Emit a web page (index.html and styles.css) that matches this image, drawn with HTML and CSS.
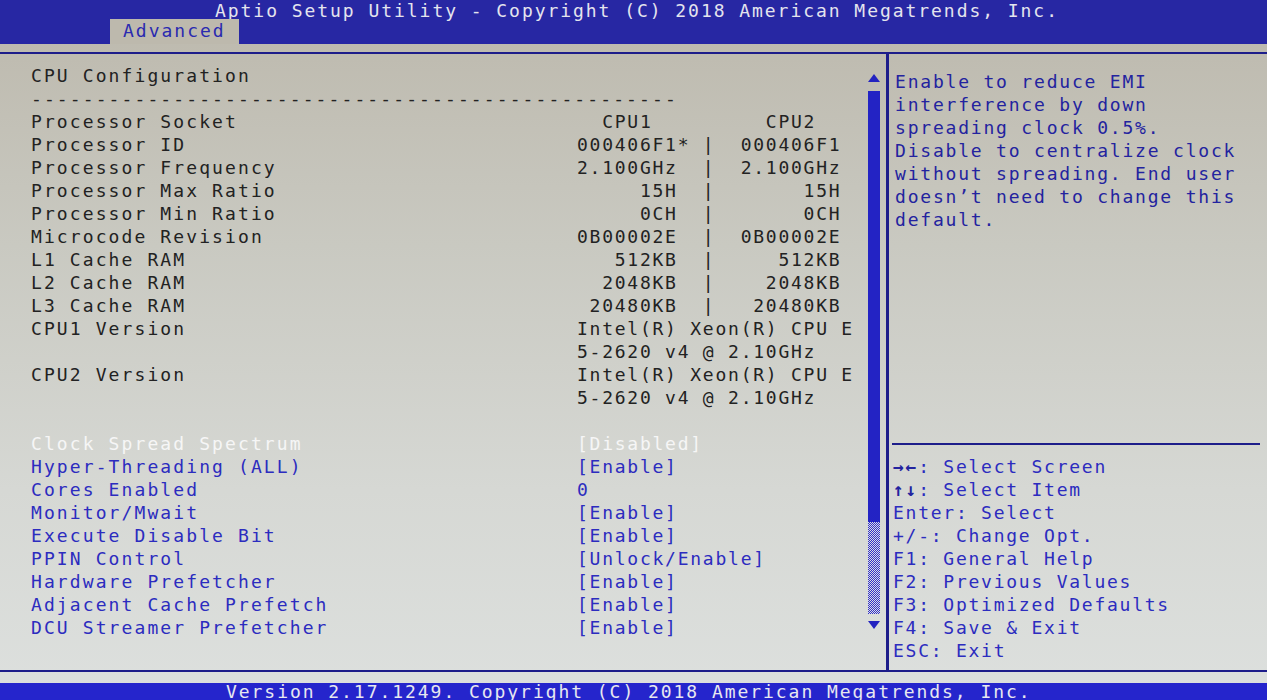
FILE: index.html
```html
<!DOCTYPE html>
<html lang="en">

<head>
    <meta charset="UTF-8">
    <meta name="viewport" content="width=device-width, initial-scale=1.0">
    <link rel="stylesheet" href="styles.css">
    <title>Aptio Setup Utility - CPU Configuration</title>
</head>

<body>
    <header class="topbar">
        <div class="title">Aptio Setup Utility - Copyright (C) 2018 American Megatrends, Inc.</div>
        <nav class="tabs"><span class="tab">Advanced</span></nav>
    </header>

    <main class="screen">
        <section class="settings">
            <div class="row"><span class="label">CPU Configuration</span></div>
            <div class="row"><span class="label">--------------------------------------------------</span></div>
            <div class="row"><span class="label">Processor Socket</span><span class="value">  CPU1         CPU2</span></div>
            <div class="row"><span class="label">Processor ID</span><span class="value">000406F1* |  000406F1</span></div>
            <div class="row"><span class="label">Processor Frequency</span><span class="value">2.100GHz  |  2.100GHz</span></div>
            <div class="row"><span class="label">Processor Max Ratio</span><span class="value">     15H  |       15H</span></div>
            <div class="row"><span class="label">Processor Min Ratio</span><span class="value">     0CH  |       0CH</span></div>
            <div class="row"><span class="label">Microcode Revision</span><span class="value">0B00002E  |  0B00002E</span></div>
            <div class="row"><span class="label">L1 Cache RAM</span><span class="value">   512KB  |     512KB</span></div>
            <div class="row"><span class="label">L2 Cache RAM</span><span class="value">  2048KB  |    2048KB</span></div>
            <div class="row"><span class="label">L3 Cache RAM</span><span class="value"> 20480KB  |   20480KB</span></div>
            <div class="row"><span class="label">CPU1 Version</span><span class="value">Intel(R) Xeon(R) CPU E</span></div>
            <div class="row"><span class="label"></span><span class="value">5-2620 v4 @ 2.10GHz</span></div>
            <div class="row"><span class="label">CPU2 Version</span><span class="value">Intel(R) Xeon(R) CPU E</span></div>
            <div class="row"><span class="label"></span><span class="value">5-2620 v4 @ 2.10GHz</span></div>
            <div class="row"></div>

            <!-- opciones editables -->
            <div class="row option selected"><span class="label">Clock Spread Spectrum</span><span class="value">[Disabled]</span></div>
            <div class="row option"><span class="label">Hyper-Threading (ALL)</span><span class="value">[Enable]</span></div>
            <div class="row option"><span class="label">Cores Enabled</span><span class="value">0</span></div>
            <div class="row option"><span class="label">Monitor/Mwait</span><span class="value">[Enable]</span></div>
            <div class="row option"><span class="label">Execute Disable Bit</span><span class="value">[Enable]</span></div>
            <div class="row option"><span class="label">PPIN Control</span><span class="value">[Unlock/Enable]</span></div>
            <div class="row option"><span class="label">Hardware Prefetcher</span><span class="value">[Enable]</span></div>
            <div class="row option"><span class="label">Adjacent Cache Prefetch</span><span class="value">[Enable]</span></div>
            <div class="row option"><span class="label">DCU Streamer Prefetcher</span><span class="value">[Enable]</span></div>
        </section>

        <div class="scrollbar">
            <span class="arrow-up"></span>
            <span class="thumb"></span>
            <span class="track"></span>
            <span class="arrow-down"></span>
        </div>

        <aside class="help">
            <div class="help-text">
                <div class="row">Enable to reduce EMI</div>
                <div class="row">interference by down</div>
                <div class="row">spreading clock 0.5%.</div>
                <div class="row">Disable to centralize clock</div>
                <div class="row">without spreading. End user</div>
                <div class="row">doesn’t need to change this</div>
                <div class="row">default.</div>
            </div>
            <div class="keys">
                <div class="row"><b class="arrows">→←</b>: Select Screen</div>
                <div class="row"><b class="arrows">↑↓</b>: Select Item</div>
                <div class="row">Enter: Select</div>
                <div class="row">+/-: Change Opt.</div>
                <div class="row">F1: General Help</div>
                <div class="row">F2: Previous Values</div>
                <div class="row">F3: Optimized Defaults</div>
                <div class="row">F4: Save &amp; Exit</div>
                <div class="row">ESC: Exit</div>
            </div>
        </aside>
    </main>

    <footer class="bottombar">Version 2.17.1249. Copyright (C) 2018 American Megatrends, Inc.</footer>
</body>

</html>
```

FILE: styles.css
```css
/* General */
body {
    margin: 0;
    width: 1267px;
    height: 700px;
    overflow: hidden;
    font-family: "DejaVu Sans Mono", "Liberation Mono", monospace;
    font-size: 18px;
    color: #222;
    background: linear-gradient(#bcb8ac 0%, #c9c9c1 35%, #d6d8d4 70%, #dde0de 100%);
}

/* Barra superior */
.topbar {
    height: 44px;
    background-color: #2727a3;
}

.title {
    padding-left: 215px;
    line-height: 22px;
    color: #e4e4ee;
    letter-spacing: 1.95px;
    white-space: pre;
}

.tabs {
    margin-top: -3px;
    padding-left: 110px;
}

.tab {
    display: inline-block;
    height: 25px;
    line-height: 23px;
    padding: 0 13px;
    background-color: #bdb9ad;
    color: #2a2ab0;
    letter-spacing: 2px;
}

/* Pantalla principal */
.screen {
    display: flex;
    height: 616px;
    margin-top: 8px;
    border-top: 2px solid #1d1d8a;
    border-bottom: 2px solid #1d1d8a;
}

.row {
    display: flex;
    height: 23px;
    line-height: 23px;
    white-space: pre;
}

.settings {
    width: 835px;
    padding: 10px 0 0 31px;
}

.label {
    width: 546px;
    flex-shrink: 0;
    letter-spacing: 2.1px;
}

.value {
    letter-spacing: 1.75px;
}

.option {
    color: #2c2cbf;
}

.selected {
    color: #f6f6f6;
}

/* Barra de desplazamiento */
.scrollbar {
    width: 20px;
    padding-top: 20px;
    display: flex;
    flex-direction: column;
}

.arrow-up,
.arrow-down {
    width: 0;
    height: 0;
    margin-left: 2px;
    border-left: 6px solid transparent;
    border-right: 6px solid transparent;
}

.arrow-up {
    border-bottom: 8px solid #2323c0;
}

.arrow-down {
    margin-top: 7px;
    border-top: 8px solid #2323c0;
}

.thumb {
    width: 12px;
    height: 431px;
    margin: 9px 0 0 2px;
    background-color: #2323c4;
}

.track {
    width: 12px;
    height: 92px;
    margin-left: 2px;
    background: repeating-conic-gradient(#3030c8 0 25%, #dcdce4 0 50%) 0 0 / 2px 2px;
}

/* Panel de ayuda */
.help {
    flex: 1;
    display: flex;
    flex-direction: column;
    border-left: 3px solid #1d1d8a;
}

.help-text {
    height: 373px;
    padding: 16px 0 0 6px;
    color: #23239f;
    letter-spacing: 1.8px;
}

.keys {
    margin: 0 7px 0 3px;
    padding: 10px 0 0 1px;
    border-top: 2px solid #1d1d8a;
    color: #2c2cbf;
    letter-spacing: 1.75px;
}

.arrows {
    font-weight: bold;
    color: #23239f;
}

/* Barra inferior */
.bottombar {
    height: 40px;
    margin-top: 11px;
    padding-left: 226px;
    line-height: 17px;
    background-color: #2525cc;
    color: #e8e8f0;
    letter-spacing: 1.95px;
    white-space: pre;
}
```
